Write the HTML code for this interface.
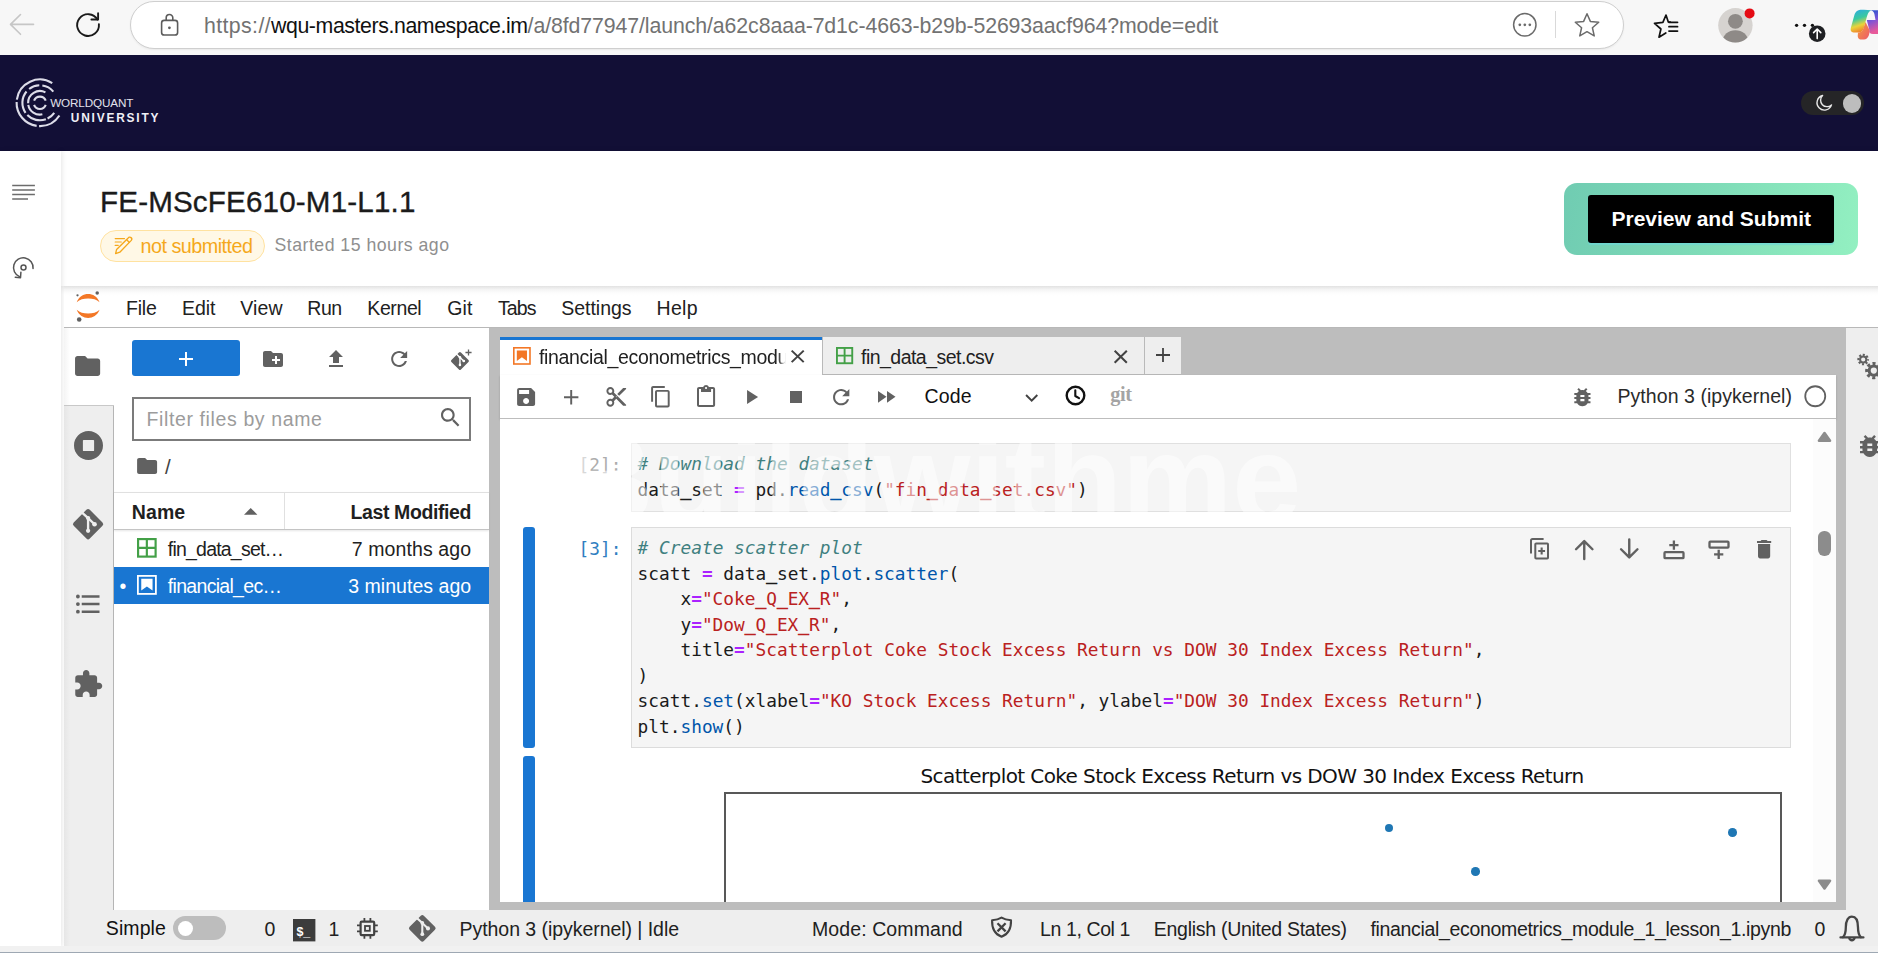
<!DOCTYPE html>
<html lang="en"><head><meta charset="utf-8"><title>FE-MScFE610-M1-L1.1</title>
<style>
html,body{margin:0;padding:0;}
body{width:1878px;height:953px;overflow:hidden;background:#fff;position:relative;font-family:"Liberation Sans",sans-serif;}
.a{position:absolute;box-sizing:border-box;}
.t{position:absolute;white-space:pre;margin:0;padding:0;}
svg{position:absolute;overflow:visible;}
</style></head>
<body>
<div class="a" style="left:0px;top:0px;width:1878px;height:55px;background:#f7f7f7;"></div>
<div class="a" style="left:130px;top:1px;width:1494px;height:48px;background:#fff;border:1.5px solid #cfcfcf;border-radius:24px;box-shadow:0 1px 2px rgba(0,0,0,.06);"></div>
<div class="a" style="left:0px;top:55px;width:1878px;height:95.5px;background:#120f36;"></div>
<div class="a" style="left:1801px;top:90.5px;width:63px;height:24.5px;background:#252527;border-radius:12.5px;"></div>
<div class="a" style="left:1842.5px;top:94px;width:18.5px;height:18.5px;background:#bdbdbd;border-radius:50%;"></div>
<div class="a" style="left:61px;top:150.5px;width:1817px;height:135.5px;background:#fff;box-shadow:0 2px 7px rgba(0,0,0,.13);"></div>
<div class="a" style="left:0;top:150.5px;width:60.8px;height:796px;background:#fff;box-shadow:1px 0 5px rgba(0,0,0,.10);"></div>
<div class="a" style="left:100px;top:230px;width:165px;height:32px;background:#fff8e6;border:1px solid #ffe2a0;border-radius:16px;"></div>
<div class="a" style="left:1564px;top:183px;width:294px;height:72px;border-radius:13px;background:linear-gradient(100deg,#70ccb2 0%,#7fdcb8 50%,#93f0c1 100%);"></div>
<div class="a" style="left:1588px;top:195px;width:246px;height:48px;border-radius:3px;background:#000;box-shadow:0 1.5px 1px rgba(110,215,215,.7);"></div>
<div class="a" style="left:64px;top:286px;width:1814px;height:42px;background:linear-gradient(180deg,#e2e2e2 0,#f4f4f4 3.5px,#fdfdfd 7px,#fff 10px);border-bottom:1px solid #b8b8b8;"></div>
<div class="a" style="left:64px;top:328px;width:1814px;height:582px;background:#bdbdbd;"></div>
<div class="a" style="left:64px;top:328px;width:50px;height:582px;background:linear-gradient(90deg,#e6e6e6 0,#eee 6px);border-right:1px solid #b5b5b5;"></div>
<div class="a" style="left:64px;top:328px;width:50px;height:77.5px;background:linear-gradient(90deg,#f4f4f4 0,#fff 6px);border-bottom:1px solid #c8c8c8;"></div>
<div class="a" style="left:114px;top:328px;width:375.3px;height:582px;background:#fff;"></div>
<div class="a" style="left:132px;top:340px;width:108px;height:36px;background:#1976d2;border-radius:3px;"></div>
<div class="a" style="left:132px;top:396.5px;width:339px;height:44px;background:#fff;border:2px solid #7b7b7b;"></div>
<div class="a" style="left:114px;top:492px;width:375.3px;height:37.5px;background:#fff;border-top:1px solid #e0e0e0;border-bottom:1px solid #c4c4c4;box-shadow:0 1px 2px rgba(0,0,0,.10);"></div>
<div class="a" style="left:284px;top:493px;width:1px;height:36px;background:#e0e0e0;"></div>
<div class="a" style="left:114px;top:567px;width:375.3px;height:36.5px;background:#1976d2;"></div>
<div class="a" style="left:1846px;top:328px;width:32px;height:582px;background:#eee;"></div>
<div class="a" style="left:64px;top:910px;width:1814px;height:36px;background:linear-gradient(90deg,#e6e6e6 0,#eee 6px);"></div>
<div class="a" style="left:0px;top:946px;width:1878px;height:5.5px;background:#f1f1f1;"></div>
<div class="a" style="left:0px;top:951.6px;width:1878px;height:2px;background:#9ea8b3;"></div>
<div class="a" style="left:500px;top:337px;width:322px;height:38px;background:#fff;border-top:3px solid #1976d2;"></div>
<div class="a" style="left:822px;top:337.3px;width:323px;height:37.7px;background:#eee;border:1px solid #b9b9b9;border-top:none;"></div>
<div class="a" style="left:1145px;top:337.3px;width:35.8px;height:37.7px;background:#eee;border-bottom:1px solid #b9b9b9;"></div>
<div class="a" style="left:500px;top:375px;width:1336px;height:43.5px;background:#fff;border-bottom:1px solid #bdbdbd;box-shadow:0 1px 2px rgba(0,0,0,.18);"></div>
<div class="a" style="left:500px;top:418.5px;width:1336px;height:483.5px;background:#fff;overflow:hidden;"><div class="a" style="left:1313px;top:0.0px;width:23px;height:484px;background:#fcfcfc;"></div><div class="a" style="left:1318.2px;top:112.10000000000002px;width:12.4px;height:25.2px;background:#8c8c8c;border-radius:6.2px;"></div><div class="a" style="left:131px;top:24.5px;width:1160px;height:68.5px;background:#f5f5f5;border:1px solid #e0e0e0;"></div><div class="a" style="left:131px;top:108.5px;width:1160px;height:221px;background:#f5f5f5;border:1px solid #dcdcdc;"></div><div class="a" style="left:23px;top:108.5px;width:12px;height:220.5px;background:#1976d2;border-radius:3px;"></div><div class="a" style="left:23px;top:337.5px;width:12px;height:200px;background:#1976d2;border-radius:3px;"></div><div class="a" style="left:224px;top:373.5px;width:1058px;height:200px;border:2px solid #585858;background:#fff;"></div><div class="a" style="left:884.8px;top:405.4000000000001px;width:8.6px;height:8.6px;background:#1f77b4;border-radius:50%;"></div><div class="a" style="left:971.2px;top:448.5px;width:8.6px;height:8.6px;background:#1f77b4;border-radius:50%;"></div><div class="a" style="left:1228.2px;top:409.70000000000005px;width:8.6px;height:8.6px;background:#1f77b4;border-radius:50%;"></div></div>
<svg style="left:74px;top:289px" width="30" height="36" viewBox="0 0 30 36"><path d="M2.700 13.200C5 7.500 9.500 5 14.150 5S23.300 7.500 25.600 13.200C22.600 10.400 18.800 9.400 14.150 9.400S5.700 10.400 2.700 13.200z" fill="#f37726"/><path d="M2.700 20.800C5 26.500 9.500 29 14.150 29S23.300 26.500 25.600 20.800C22.600 23.600 18.800 24.600 14.150 24.600S5.700 23.600 2.700 20.800z" fill="#f37726"/><circle cx="23.200" cy="3.900" r="1.750" fill="#616161"/><circle cx="3.500" cy="6.300" r="1.150" fill="#616161"/><circle cx="5.200" cy="30.500" r="2.300" fill="#616161"/></svg>
<svg style="left:75.4px;top:355.9px;" width="25.2" height="20.1" viewBox="2 4 20 16" preserveAspectRatio="xMidYMid meet" fill="#616161"><path d="M10 4H4c-1.1 0-1.99.9-1.99 2L2 18c0 1.1.9 2 2 2h16c1.1 0 2-.9 2-2V8c0-1.1-.9-2-2-2h-8l-2-2z"/></svg>
<svg style="left:73.5px;top:431px;" width="29.0" height="29" viewBox="8 8 496 496" preserveAspectRatio="xMidYMid meet" fill="#616161"><path d="M256 8C119 8 8 119 8 256s111 248 248 248 248-111 248-248S393 8 256 8zm96 328c0 8.800-7.200 16-16 16H176c-8.800 0-16-7.200-16-16V176c0-8.800 7.200-16 16-16h160c8.800 0 16 7.200 16 16v160z"/></svg>
<svg style="left:72.8px;top:509.4px;" width="30.2" height="30.3" viewBox="6.2 6.2 87.6 87.6" preserveAspectRatio="xMidYMid meet" fill="#616161"><rect x="17" y="17" width="66" height="66" rx="7" transform="rotate(45 50 50)"/><g fill="none" stroke="#eee" stroke-width="6.800" stroke-linecap="butt"><path d="M32.500 16.500L50 32.500V69"/><path d="M51.500 34L68.700 50.300"/></g><g fill="#eee"><circle cx="50" cy="32.500" r="6.200"/><circle cx="50" cy="69.300" r="6.200"/><circle cx="68.700" cy="50.300" r="6.700"/></g></svg>
<svg style="left:75.9px;top:593.5px;" width="23.5" height="20.2" viewBox="2.5 4.5 18.5 15.0" preserveAspectRatio="xMidYMid meet" fill="#616161"><path d="M7,5H21V7H7V5M7,13V11H21V13H7M4,4.5A1.5,1.5 0 0,1 5.5,6A1.5,1.5 0 0,1 4,7.5A1.5,1.5 0 0,1 2.5,6A1.5,1.5 0 0,1 4,4.5M4,10.5A1.5,1.5 0 0,1 5.5,12A1.5,1.5 0 0,1 4,13.5A1.5,1.5 0 0,1 2.5,12A1.5,1.5 0 0,1 4,10.5M7,19V17H21V19H7M4,16.5A1.5,1.5 0 0,1 5.5,18A1.5,1.5 0 0,1 4,19.5A1.5,1.5 0 0,1 2.5,18A1.5,1.5 0 0,1 4,16.5Z"/></svg>
<svg style="left:74.5px;top:669.5px;" width="27.5" height="27.0" viewBox="2 1 21 21" preserveAspectRatio="xMidYMid meet" fill="#616161"><path d="M20.5 11H19V7c0-1.1-.9-2-2-2h-4V3.5C13 2.12 11.88 1 10.5 1S8 2.12 8 3.5V5H4c-1.1 0-1.99.9-1.99 2v3.8H3.5c1.49 0 2.7 1.21 2.7 2.7s-1.21 2.7-2.7 2.7H2V20c0 1.1.9 2 2 2h3.8v-1.5c0-1.49 1.21-2.7 2.7-2.7 1.49 0 2.7 1.21 2.7 2.7V22H17c1.1 0 2-.9 2-2v-4h1.5c1.38 0 2.5-1.12 2.5-2.5S21.88 11 20.5 11z"/></svg>
<svg style="left:179.2px;top:351.5px;" width="14.0" height="14.0" viewBox="5 5 14 14" preserveAspectRatio="xMidYMid meet" fill="#fff"><path d="M19 13h-6v6h-2v-6H5v-2h6V5h2v6h6v2z"/></svg>
<svg style="left:263px;top:351px;" width="20" height="16" viewBox="2 4 20 16" preserveAspectRatio="xMidYMid meet" fill="#616161"><path d="M20 6h-8l-2-2H4c-1.11 0-1.99.89-1.99 2L2 18c0 1.11.89 2 2 2h16c1.11 0 2-.89 2-2V8c0-1.11-.89-2-2-2zm-1 8h-3v3h-2v-3h-3v-2h3V9h2v3h3v2z"/></svg>
<svg style="left:329px;top:350px;" width="14" height="17" viewBox="5 3 14 17" preserveAspectRatio="xMidYMid meet" fill="#616161"><path d="M9 16h6v-6h4l-7-7-7 7h4zm-4 2h14v2H5z"/></svg>
<svg style="left:391px;top:351px;" width="16.3" height="16" viewBox="4 4 16 16" preserveAspectRatio="xMidYMid meet" fill="#616161"><path d="M17.65 6.35C16.2 4.9 14.21 4 12 4c-4.42 0-7.99 3.58-7.99 8s3.57 8 7.99 8c3.73 0 6.84-2.55 7.73-6h-2.08c-.82 2.33-3.04 4-5.65 4-3.31 0-6-2.69-6-6s2.69-6 6-6c1.66 0 3.14.69 4.22 1.78L13 11h7V4l-2.35 2.35z"/></svg>
<svg style="left:451.3px;top:352px;" width="17.9" height="17.9" viewBox="6.2 6.2 87.6 87.6" preserveAspectRatio="xMidYMid meet" fill="#616161"><rect x="17" y="17" width="66" height="66" rx="7" transform="rotate(45 50 50)"/><g fill="none" stroke="#fff" stroke-width="6.800" stroke-linecap="butt"><path d="M32.500 16.500L50 32.500V69"/><path d="M51.500 34L68.700 50.300"/></g><g fill="#fff"><circle cx="50" cy="32.500" r="6.200"/><circle cx="50" cy="69.300" r="6.200"/><circle cx="68.700" cy="50.300" r="6.700"/></g></svg>
<svg style="left:464.600px;top:349.200px" width="7" height="7" viewBox="0 0 8 8"><path d="M4 0.500V7.500M0.500 4H7.500" stroke="#616161" stroke-width="1.500" fill="none"/></svg>
<svg style="left:440.6px;top:407.5px;" width="18.4" height="18.5" viewBox="3 3 17.49 17.49" preserveAspectRatio="xMidYMid meet" fill="#616161"><path d="M15.5 14h-.79l-.28-.27C15.41 12.59 16 11.11 16 9.5 16 5.91 13.09 3 9.5 3S3 5.91 3 9.5 5.91 16 9.5 16c1.61 0 3.09-.59 4.23-1.57l.27.28v.79l5 4.99L20.49 19l-4.99-5zm-6 0C7.01 14 5 11.99 5 9.5S7.01 5 9.5 5 14 7.01 14 9.5 11.99 14 9.5 14z"/></svg>
<svg style="left:136.8px;top:458px;" width="20.2" height="16" viewBox="2 4 20 16" preserveAspectRatio="xMidYMid meet" fill="#616161"><path d="M10 4H4c-1.1 0-1.99.9-1.99 2L2 18c0 1.1.9 2 2 2h16c1.1 0 2-.9 2-2V8c0-1.1-.9-2-2-2h-8l-2-2z"/></svg>
<svg style="left:244.400px;top:507.500px" width="13.400" height="6.800" viewBox="0 0 14 7"><path d="M0 7L7 0L14 7z" fill="#616161"/></svg>
<svg style="left:137.3px;top:538.2px" width="19.7" height="19.7" viewBox="0 0 20 20" fill="none" stroke="#43a047" stroke-width="2.200"><rect x="1.100" y="1.100" width="17.800" height="17.800"/><path d="M10 1V19M1 10H19"/></svg>
<svg style="left:137.3px;top:574.8px" width="19.8" height="19.8" viewBox="0 0 20 20"><rect x="0.900" y="0.900" width="18.200" height="18.200" fill="none" stroke="#fff" stroke-width="1.800"/><path d="M4.300 3.800H15.700V15.600L10 11.500L4.300 15.600z" fill="#fff"/></svg>
<svg style="left:513.4px;top:346.8px" width="17.8" height="17.8" viewBox="0 0 20 20"><rect x="0.900" y="0.900" width="18.200" height="18.200" fill="none" stroke="#f37726" stroke-width="1.800"/><path d="M4.300 3.800H15.700V15.600L10 11.500L4.300 15.600z" fill="#f37726"/></svg>
<svg style="left:836px;top:347.2px" width="17.2" height="17.2" viewBox="0 0 20 20" fill="none" stroke="#43a047" stroke-width="2.200"><rect x="1.100" y="1.100" width="17.800" height="17.800"/><path d="M10 1V19M1 10H19"/></svg>
<svg style="left:791.3px;top:349.8px" width="13.4" height="12.8" viewBox="0 0 10 10" preserveAspectRatio="none"><path d="M0.500 0.500L9.500 9.500M9.500 0.500L0.500 9.500" stroke="#424242" stroke-width="1.500" fill="none"/></svg>
<svg style="left:1113.5px;top:349.5px" width="13.5" height="13.5" viewBox="0 0 10 10" preserveAspectRatio="none"><path d="M0.500 0.500L9.500 9.500M9.500 0.500L0.500 9.500" stroke="#424242" stroke-width="1.500" fill="none"/></svg>
<svg style="left:1156px;top:348.300px" width="14" height="14" viewBox="0 0 14 14"><path d="M7 0V14M0 7H14" stroke="#424242" stroke-width="1.800" fill="none"/></svg>
<svg style="left:516.8px;top:387.9px;" width="18.2" height="18.0" viewBox="3 3 18 18" preserveAspectRatio="xMidYMid meet" fill="#616161"><path d="M17 3H5c-1.11 0-2 .9-2 2v14c0 1.1.89 2 2 2h14c1.1 0 2-.9 2-2V7l-4-4zm-5 16c-1.66 0-3-1.34-3-3s1.34-3 3-3 3 1.34 3 3-1.34 3-3 3zm3-10H5V5h10v4z"/></svg>
<svg style="left:563.800px;top:389.800px" width="14.400" height="14.400" viewBox="0 0 14 14"><path d="M7 0V14M0 7H14" stroke="#616161" stroke-width="1.900" fill="none"/></svg>
<svg style="left:606px;top:387.3px;" width="20.5" height="19.7" viewBox="2 2 20 20" preserveAspectRatio="xMidYMid meet" fill="#616161"><path d="M9.64 7.64c.23-.5.36-1.05.36-1.64 0-2.21-1.79-4-4-4S2 3.79 2 6s1.79 4 4 4c.59 0 1.14-.13 1.64-.36L10 12l-2.36 2.36C7.14 14.13 6.59 14 6 14c-2.21 0-4 1.79-4 4s1.79 4 4 4 4-1.79 4-4c0-.59-.13-1.14-.36-1.64L12 14l7 7h3v-1L9.64 7.64zM6 8c-1.1 0-2-.89-2-2s.9-2 2-2 2 .89 2 2-.9 2-2 2zm0 12c-1.1 0-2-.89-2-2s.9-2 2-2 2 .89 2 2-.9 2-2 2zm6-7.5c-.28 0-.5-.22-.5-.5s.22-.5.5-.5.5.22.5.5-.22.5-.5.5zM19 3l-6 6 2 2 7-7V3z"/></svg>
<svg style="left:651px;top:386.3px;" width="18.8" height="21.5" viewBox="2 1 19 22" preserveAspectRatio="xMidYMid meet" fill="#616161"><path d="M16 1H4c-1.1 0-2 .9-2 2v14h2V3h12V1zm3 4H8c-1.1 0-2 .9-2 2v14c0 1.1.9 2 2 2h11c1.1 0 2-.9 2-2V7c0-1.1-.9-2-2-2zm0 16H8V7h11v14z"/></svg>
<svg style="left:696.8px;top:385.4px;" width="18.1" height="21.9" viewBox="3 0 18 22" preserveAspectRatio="none" fill="#616161"><path d="M19 2h-4.18C14.4.84 13.3 0 12 0c-1.3 0-2.4.84-2.82 2H5c-1.1 0-2 .9-2 2v16c0 1.1.9 2 2 2h14c1.1 0 2-.9 2-2V4c0-1.1-.9-2-2-2zm-7 0c.55 0 1 .45 1 1s-.45 1-1 1-1-.45-1-1 .45-1 1-1zm7 18H5V4h2v3h10V4h2v16z"/></svg>
<svg style="left:746.9px;top:390.3px;" width="11.1" height="14.0" viewBox="8 5 11 14" preserveAspectRatio="xMidYMid meet" fill="#616161"><path d="M8 5v14l11-7z"/></svg>
<div class="a" style="left:790px;top:391.4px;width:12px;height:12px;background:#616161;"></div>
<svg style="left:833px;top:388.7px;" width="16.4" height="16.3" viewBox="4 4 16 16" preserveAspectRatio="xMidYMid meet" fill="#616161"><path d="M17.65 6.35C16.2 4.9 14.21 4 12 4c-4.42 0-7.99 3.58-7.99 8s3.57 8 7.99 8c3.73 0 6.84-2.55 7.73-6h-2.08c-.82 2.33-3.04 4-5.65 4-3.31 0-6-2.69-6-6s2.69-6 6-6c1.66 0 3.14.69 4.22 1.78L13 11h7V4l-2.35 2.35z"/></svg>
<svg style="left:877.7px;top:391.3px;" width="17.5" height="11.7" viewBox="4 6 17.5 12" preserveAspectRatio="none" fill="#616161"><path d="M4 18l8.5-6L4 6v12zm9-12v12l8.5-6L13 6z"/></svg>
<svg style="left:1024.500px;top:393.800px" width="13.400" height="8.200" viewBox="0 0 13 8"><path d="M1 1L6.500 6.500L12 1" stroke="#424242" stroke-width="1.900" fill="none"/></svg>
<svg style="left:1065.400px;top:384.800px" width="21" height="21" viewBox="0 0 21 21" fill="none" stroke="#111" stroke-width="2.400"><circle cx="10.500" cy="10.500" r="8.800"/><path d="M10.300 5.200V11L14 13.200" stroke-width="2.100" stroke-linecap="round" stroke-linejoin="round"/></svg>
<svg style="left:1574px;top:388px;" width="16.8" height="18.2" viewBox="4 3 16 18" preserveAspectRatio="xMidYMid meet" fill="#616161"><path d="M20 8h-2.81c-.45-.78-1.07-1.45-1.82-1.96L17 4.41 15.59 3l-2.17 2.17C12.96 5.06 12.49 5 12 5c-.49 0-.96.06-1.41.17L8.41 3 7 4.41l1.62 1.63C7.88 6.55 7.26 7.22 6.81 8H4v2h2.09c-.05.33-.09.66-.09 1v1H4v2h2v1c0 .34.04.67.09 1H4v2h2.81c1.04 1.79 2.97 3 5.19 3s4.15-1.21 5.19-3H20v-2h-2.09c.05-.33.09-.66.09-1v-1h2v-2h-2v-1c0-.34-.04-.67-.09-1H20V8zm-6 8h-4v-2h4v2zm0-4h-4v-2h4v2z"/></svg>
<svg style="left:1803.500px;top:384.700px" width="22.500" height="22.500" viewBox="0 0 22.500 22.500"><circle cx="11.250" cy="11.250" r="10" fill="none" stroke="#616161" stroke-width="1.800"/></svg>
<svg style="left:1529.600px;top:538px" width="19" height="21.600" viewBox="0 0 19 21.600" fill="none" stroke="#616161" stroke-width="2"><path d="M13.600 1H2.600C1.700 1 1 1.700 1 2.600V15.600"/><rect x="5.300" y="5.400" width="12.700" height="15.200" rx="0.800"/><path d="M11.650 9.600V16.400M8.250 13H15.050" stroke-width="2.100"/></svg>
<svg style="left:1574px;top:539px" width="20.500" height="20.500" viewBox="0 0 20 20" fill="none" stroke="#616161" stroke-width="2.350" stroke-linecap="round" stroke-linejoin="round"><path d="M10 19.500V2.500M2 10L10 2L18 10"/></svg>
<svg style="left:1618.8px;top:539px" width="20.500" height="20.500" viewBox="0 0 20 20" fill="none" stroke="#616161" stroke-width="2.350" stroke-linecap="round" stroke-linejoin="round"><path d="M10 0.500V17.500M2 10L10 18L18 10"/></svg>
<svg style="left:1663px;top:538.500px" width="22" height="21" viewBox="0 0 22 21" fill="none" stroke="#616161" stroke-width="2.300"><path d="M10.900 1.600V10.800M6.300 6.200H15.500"/><rect x="1.500" y="13.200" width="19" height="6" rx="0.800"/></svg>
<svg style="left:1708.300px;top:539px" width="22" height="21" viewBox="0 0 22 21" fill="none" stroke="#616161" stroke-width="2.300"><path d="M10.700 10.800V20M6.100 15.400H15.300"/><rect x="1.500" y="2.600" width="19" height="6" rx="0.800"/></svg>
<svg style="left:1756.8px;top:539.8px;" width="14.2" height="18.4" viewBox="5 3 14 18" preserveAspectRatio="none" fill="#616161"><path d="M6 19c0 1.1.9 2 2 2h8c1.1 0 2-.9 2-2V7H6v12zM19 4h-3.5l-1-1h-5l-1 1H5v2h14V4z"/></svg>
<svg style="left:1817.300px;top:430.900px" width="15" height="11.500" viewBox="0 0 15 11.500"><path d="M2 9.800L7.500 2.100L13 9.800z" fill="#8c8c8c" stroke="#8c8c8c" stroke-width="2.600" stroke-linejoin="round"/></svg>
<svg style="left:1817px;top:879.300px" width="15" height="11.500" viewBox="0 0 15 11.500"><path d="M2 1.700L7.500 9.400L13 1.700z" fill="#8c8c8c" stroke="#8c8c8c" stroke-width="2.600" stroke-linejoin="round"/></svg>
<div class="a" style="left:173.300px;top:916.400px;width:52.400px;height:23.500px;background:#bdbdbd;border-radius:12px;"></div>
<div class="a" style="left:177.800px;top:920.500px;width:15.300px;height:15.300px;background:#fff;border-radius:50%;"></div>
<svg style="left:292.800px;top:919.200px" width="22.400" height="22.400" viewBox="0 0 22.400 22.400"><rect width="22.400" height="22.400" fill="#3c3c3c"/><text x="3.400" y="16.600" font-family="'Liberation Sans',sans-serif" font-size="12.500" font-weight="700" fill="#fff">$_</text></svg>
<svg style="left:356.500px;top:917.800px" width="20.800" height="20.800" viewBox="0 0 20.800 20.800" fill="none" stroke="#424242"><rect x="3.600" y="3.600" width="13.600" height="13.600" rx="1.200" stroke-width="2.200"/><rect x="8" y="8" width="4.800" height="4.800" stroke-width="1.800"/><path d="M7.400 0V3M13.400 0V3M7.400 17.800V20.800M13.400 17.800V20.800M0 7.400H3M0 13.400H3M17.800 7.400H20.800M17.800 13.400H20.800" stroke-width="1.800"/></svg>
<svg style="left:408.7px;top:915.4px;" width="26.6" height="26.6" viewBox="6.2 6.2 87.6 87.6" preserveAspectRatio="xMidYMid meet" fill="#616161"><rect x="17" y="17" width="66" height="66" rx="7" transform="rotate(45 50 50)"/><g fill="none" stroke="#eee" stroke-width="6.800" stroke-linecap="butt"><path d="M32.500 16.500L50 32.500V69"/><path d="M51.500 34L68.700 50.300"/></g><g fill="#eee"><circle cx="50" cy="32.500" r="6.200"/><circle cx="50" cy="69.300" r="6.200"/><circle cx="68.700" cy="50.300" r="6.700"/></g></svg>
<svg style="left:990px;top:915.800px" width="23" height="23" viewBox="0 0 23 23" fill="none" stroke="#424242" stroke-width="2.100" stroke-linejoin="round"><path d="M11.550 1.600C8.800 3.300 5.300 4 2.100 4.200C1.800 11.700 4.300 17.900 11.550 20.700C18.800 17.900 21.300 11.700 21 4.200C17.800 4 14.300 3.300 11.550 1.600z"/><path d="M7.500 7.300L15.600 15.400M15.600 7.300L7.500 15.400" stroke-width="2.300"/></svg>
<svg style="left:1839px;top:915px" width="26" height="28" viewBox="0 0 26 28" fill="none" stroke="#454545" stroke-width="2.300" stroke-linecap="round" stroke-linejoin="round"><path d="M3.900 22.300C6 20.200 6.800 17.500 6.800 12.500C6.800 5.500 9.300 1.600 12.900 1.600S19 5.500 19 12.500C19 17.500 19.800 20.200 21.900 22.300"/><path d="M1.500 22.400H24.400"/><path d="M10.300 23.300A2.700 2.700 0 0 0 15.500 23.300"/></svg>
<svg style="left:1857px;top:353px" width="21" height="28" viewBox="0 0 21 28" fill="none" stroke="#616161"><circle cx="6.200" cy="6.500" r="3.100" stroke-width="2"/><circle cx="6.200" cy="6.500" r="4.700" stroke-width="2.300" stroke-dasharray="2 1.691" stroke-dashoffset="1"/><circle cx="16.800" cy="17.600" r="4.650" stroke-width="3.100"/><circle cx="16.800" cy="17.600" r="7.100" stroke-width="3.100" stroke-dasharray="3 2.576" stroke-dashoffset="1.500"/></svg>
<svg style="left:1859.5px;top:435px;" width="19.6" height="22" viewBox="4 3 16 18" preserveAspectRatio="xMidYMid meet" fill="#616161"><path d="M20 8h-2.81c-.45-.78-1.07-1.45-1.82-1.96L17 4.41 15.59 3l-2.17 2.17C12.96 5.06 12.49 5 12 5c-.49 0-.96.06-1.41.17L8.41 3 7 4.41l1.62 1.63C7.88 6.55 7.26 7.22 6.81 8H4v2h2.09c-.05.33-.09.66-.09 1v1H4v2h2v1c0 .34.04.67.09 1H4v2h2.81c1.04 1.79 2.97 3 5.19 3s4.15-1.21 5.19-3H20v-2h-2.09c.05-.33.09-.66.09-1v-1h2v-2h-2v-1c0-.34-.04-.67-.09-1H20V8zm-6 8h-4v-2h4v2zm0-4h-4v-2h4v2z"/></svg>
<svg style="left:9px;top:13px" width="26" height="23" viewBox="0 0 26 23" fill="none" stroke="#c6c6c6" stroke-width="1.600" stroke-linecap="round" stroke-linejoin="round"><path d="M24.500 11.400H1.600M11.500 1.500L1.500 11.400L11.500 21.300"/></svg>
<svg style="left:75px;top:12px" width="27" height="27" viewBox="0 0 27 27" fill="none" stroke="#1a1a1a" stroke-width="1.900" stroke-linecap="round" stroke-linejoin="round"><path d="M23.91 12.10A10.9 10.9 0 1 1 22.49 7.60"/><path d="M23.100 1.300V7.500H16.400"/></svg>
<svg style="left:158.500px;top:12.500px" width="21" height="24" viewBox="0 0 21 24" fill="none" stroke="#5c5c5c" stroke-width="1.600"><rect x="2.600" y="7.400" width="16" height="14.600" rx="2.600"/><path d="M7.200 7.400V4.800A3.300 3.300 0 0 1 13.800 4.800V7.400"/><circle cx="10.400" cy="14.800" r="1.400" fill="#5c5c5c" stroke="none"/></svg>
<svg style="left:1512px;top:12px" width="26" height="26" viewBox="0 0 26 26"><circle cx="12.800" cy="12.800" r="11.200" fill="none" stroke="#6b6b6b" stroke-width="1.500"/><g fill="#6b6b6b"><circle cx="7.800" cy="12.800" r="1.350"/><circle cx="12.800" cy="12.800" r="1.350"/><circle cx="17.800" cy="12.800" r="1.350"/></g></svg>
<div class="a" style="left:1555px;top:11px;width:1.2px;height:27px;background:#d9d9d9;"></div>
<svg style="left:1574px;top:11.500px" width="26" height="27" viewBox="0 0 26 27"><path d="M13.00 1.70 L16.35 9.39 L24.70 10.20 L18.42 15.76 L20.23 23.95 L13.00 19.70 L5.77 23.95 L7.58 15.76 L1.30 10.20 L9.65 9.39 z" fill="none" stroke="#6b6b6b" stroke-width="1.500" stroke-linejoin="round"/></svg>
<svg style="left:1652px;top:12px" width="28" height="28" viewBox="0 0 28 28" fill="none" stroke="#111" stroke-width="1.700" stroke-linecap="round" stroke-linejoin="round"><path d="M18.300 10.200L16.300 10L14 3L10.900 10.400L2.500 11.300L8.900 17L7 25.200L13.800 21"/><path d="M17 10.300H25.500M17 14.700H25.500M17 19.100H25.500" stroke-width="1.800"/></svg>
<svg style="left:1717.500px;top:7.500px" width="37" height="35" viewBox="0 0 37 35"><defs><clipPath id="avc"><circle cx="17.400" cy="17.300" r="17.200"/></clipPath></defs><circle cx="17.400" cy="17.300" r="17.200" fill="#d6d3d0"/><g clip-path="url(#avc)" fill="#8e8a87"><circle cx="17.400" cy="13.300" r="7.400"/><ellipse cx="17.400" cy="33" rx="12.600" ry="10.800"/></g><circle cx="31.600" cy="5.400" r="5" fill="#e50b14"/></svg>
<svg style="left:1793px;top:20px" width="34" height="24" viewBox="0 0 34 24"><g fill="#111"><circle cx="3.600" cy="5.300" r="1.650"/><circle cx="11.500" cy="5.300" r="1.650"/><circle cx="19.400" cy="5.300" r="1.650"/></g><circle cx="24.200" cy="13.700" r="8.300" fill="#1f2023"/><path d="M24.200 18.600V9.300M20.600 12.600L24.200 9L27.800 12.600" fill="none" stroke="#fff" stroke-width="1.600" stroke-linecap="round" stroke-linejoin="round"/></svg>
<svg style="left:1849px;top:8px" width="29" height="34" viewBox="0 0 29 34"><defs><linearGradient id="cpa" x1="0" y1="0" x2="0.300" y2="1"><stop offset="0" stop-color="#2aa7e8"/><stop offset="0.450" stop-color="#39c9a0"/><stop offset="0.750" stop-color="#e9d43a"/><stop offset="1" stop-color="#f08a2c"/></linearGradient><linearGradient id="cpb" x1="0" y1="0" x2="0.200" y2="1"><stop offset="0" stop-color="#1b57c9"/><stop offset="0.500" stop-color="#7a55d8"/><stop offset="1" stop-color="#e85a9a"/></linearGradient><linearGradient id="cpc" x1="0" y1="0" x2="1" y2="1"><stop offset="0" stop-color="#f2a03a"/><stop offset="1" stop-color="#ee5a6a"/></linearGradient></defs><path d="M8 3C9.500 1.800 12 1.600 15 1.800L22 2.200C19.500 3.500 18.600 6 17.800 9L14.800 20C13.800 23.500 12 24.500 8.500 24.400H4.500C2 24.300 1.200 22.500 1.800 20L5.400 7C5.900 5.300 6.800 3.900 8 3z" fill="url(#cpa)"/><path d="M20 2.200C23 2 25 3.500 25.400 6L26.500 12L29 12V2.200z M17.800 12H29V26H24C21 26 19.800 24.500 20.300 22z" fill="url(#cpb)"/><path d="M9 24.400C12 24.400 13.500 23 14.400 20.500L16.500 14L20.500 22C21 25 19.500 31.500 15 31.500H12.500C9.500 31.500 8.500 29.500 8.800 27z" fill="url(#cpc)"/></svg>
<svg style="left:8px;top:70px" width="64" height="64" viewBox="0 0 64 64" fill="none" stroke="#dcdce8" stroke-width="2.100"><path d="M44.25 13.04A23.3 23.3 0 0 0 8.83 29.56M8.61 31.99A23.3 23.3 0 0 0 28.66 55.87M31.09 56.09A23.3 23.3 0 0 0 51.44 45.49M45.31 21.55A17.5 17.5 0 0 0 34.34 15.47M31.29 15.31A17.5 17.5 0 0 0 21.13 19.01M18.49 21.55A17.5 17.5 0 0 0 17.56 42.84M19.31 44.96A17.5 17.5 0 0 0 37.89 49.24M39.57 48.53A17.5 17.5 0 0 0 46.24 42.84M37.44 22.38A11.8 11.8 0 0 0 20.11 33.21M20.28 34.85A11.8 11.8 0 0 0 34.35 44.34M37.73 30.68A6.2 6.2 0 0 0 26.07 30.68M26.07 34.92A6.2 6.2 0 0 0 37.73 34.92"/></svg>
<svg style="left:1815px;top:94px" width="18" height="18" viewBox="0 0 18 18" fill="none" stroke="#e8e8e8" stroke-width="1.400" stroke-linejoin="round"><path d="M7.600 1.500A7.400 7.400 0 1 0 16.500 10.900A6.300 6.300 0 0 1 7.600 1.500z"/></svg>
<svg style="left:12px;top:184px" width="24" height="17" viewBox="0 0 24 17" stroke="#6c6c6c" stroke-width="1.500" fill="none"><path d="M0.200 1.400H22.900M0.200 5.900H22.900M0.200 10.400H22.900M0.200 15H16"/></svg>
<svg style="left:11px;top:255px" width="25" height="25" viewBox="0 0 25 25" fill="none" stroke="#555" stroke-width="1.500" stroke-linecap="round" stroke-linejoin="round"><path d="M22.06 13.45A9.8 9.8 0 1 0 8.47 21.62"/><path d="M4.300 22.200L9.500 22.700L9.900 17.300"/><circle cx="12.500" cy="12.600" r="2.500"/></svg>
<svg style="left:113.500px;top:236px" width="20" height="19" viewBox="0 0 20 19" fill="none" stroke="#f5a81c" stroke-width="1.350" stroke-linejoin="round" stroke-linecap="round"><path d="M14.200 1.900A1.900 1.900 0 0 1 17.300 4.400L5.800 16.200L1.600 17.600L2.600 13.400z"/><path d="M12.500 3.600L15.400 6.400"/><path d="M1.200 2.600H10.500M1.200 6H7.300M1.200 9.400H4.200" stroke-width="1.200"/></svg>
<span class="t" id="t0" style="left:204px;top:11.2px;height:30px;line-height:30px;font-size:21.3px;color:#727272;font-weight:400;font-family:'Liberation Sans', sans-serif;font-style:normal;letter-spacing:0.385px;">https://</span>
<span class="t" id="t1" style="left:271px;top:11.2px;height:30px;line-height:30px;font-size:21.3px;color:#111;font-weight:400;font-family:'Liberation Sans', sans-serif;font-style:normal;letter-spacing:-0.405px;">wqu-masters.namespace.im</span>
<span class="t" id="t2" style="left:527.6px;top:11.2px;height:30px;line-height:30px;font-size:21.3px;color:#727272;font-weight:400;font-family:'Liberation Sans', sans-serif;font-style:normal;letter-spacing:-0.097px;">/a/8fd77947/launch/a62c8aaa-7d1c-4663-b29b-52693aacf964?mode=edit</span>
<span class="t" id="t3" style="left:50.2px;top:95.2px;height:16px;line-height:16px;font-size:11.7px;color:#e2e2ec;font-weight:400;font-family:'Liberation Sans', sans-serif;font-style:normal;letter-spacing:-0.142px;">WORLDQUANT</span>
<span class="t" id="t4" style="left:70.8px;top:109.7px;height:16px;line-height:16px;font-size:11.9px;color:#f0f0f6;font-weight:700;font-family:'Liberation Sans', sans-serif;font-style:normal;letter-spacing:1.804px;">UNIVERSITY</span>
<span class="t" id="t5" style="left:100px;top:182.1px;height:40px;line-height:40px;font-size:29.6px;color:#1b1b1b;font-weight:400;font-family:'Liberation Sans', sans-serif;font-style:normal;letter-spacing:0.160px;-webkit-text-stroke:0.35px #1b1b1b;">FE-MScFE610-M1-L1.1</span>
<span class="t" id="t6" style="left:140.5px;top:230.8px;height:30px;line-height:30px;font-size:19.8px;color:#f5a81c;font-weight:400;font-family:'Liberation Sans', sans-serif;font-style:normal;letter-spacing:-0.520px;">not submitted</span>
<span class="t" id="t7" style="left:274.5px;top:230.4px;height:30px;line-height:30px;font-size:17.7px;color:#8f8f8f;font-weight:400;font-family:'Liberation Sans', sans-serif;font-style:normal;letter-spacing:0.490px;">Started 15 hours ago</span>
<span class="t" id="t8" style="left:1611.5px;top:203.6px;height:30px;line-height:30px;font-size:21px;color:#fff;font-weight:700;font-family:'Liberation Sans', sans-serif;font-style:normal;letter-spacing:-0.003px;">Preview and Submit</span>
<span class="t" id="t9" style="left:126.10000000000001px;top:293.1px;height:30px;line-height:30px;font-size:19.5px;color:#212121;font-weight:400;font-family:'Liberation Sans', sans-serif;font-style:normal;letter-spacing:-0.255px;">File</span>
<span class="t" id="t10" style="left:182.0px;top:293.1px;height:30px;line-height:30px;font-size:19.5px;color:#212121;font-weight:400;font-family:'Liberation Sans', sans-serif;font-style:normal;letter-spacing:-0.077px;">Edit</span>
<span class="t" id="t11" style="left:240.2px;top:293.1px;height:30px;line-height:30px;font-size:19.5px;color:#212121;font-weight:400;font-family:'Liberation Sans', sans-serif;font-style:normal;letter-spacing:0.145px;">View</span>
<span class="t" id="t12" style="left:307.2px;top:293.1px;height:30px;line-height:30px;font-size:19.5px;color:#212121;font-weight:400;font-family:'Liberation Sans', sans-serif;font-style:normal;letter-spacing:-0.394px;">Run</span>
<span class="t" id="t13" style="left:367.3px;top:293.1px;height:30px;line-height:30px;font-size:19.5px;color:#212121;font-weight:400;font-family:'Liberation Sans', sans-serif;font-style:normal;letter-spacing:-0.396px;">Kernel</span>
<span class="t" id="t14" style="left:447.2px;top:293.1px;height:30px;line-height:30px;font-size:19.5px;color:#212121;font-weight:400;font-family:'Liberation Sans', sans-serif;font-style:normal;letter-spacing:0.126px;">Git</span>
<span class="t" id="t15" style="left:498.0px;top:293.1px;height:30px;line-height:30px;font-size:19.5px;color:#212121;font-weight:400;font-family:'Liberation Sans', sans-serif;font-style:normal;letter-spacing:-0.876px;">Tabs</span>
<span class="t" id="t16" style="left:561.2px;top:293.1px;height:30px;line-height:30px;font-size:19.5px;color:#212121;font-weight:400;font-family:'Liberation Sans', sans-serif;font-style:normal;letter-spacing:-0.009px;">Settings</span>
<span class="t" id="t17" style="left:656.5px;top:293.1px;height:30px;line-height:30px;font-size:19.5px;color:#212121;font-weight:400;font-family:'Liberation Sans', sans-serif;font-style:normal;letter-spacing:0.348px;">Help</span>
<span class="t" id="t18" style="left:146.5px;top:403.8px;height:30px;line-height:30px;font-size:19.5px;color:#9c9c9c;font-weight:400;font-family:'Liberation Sans', sans-serif;font-style:normal;letter-spacing:0.618px;">Filter files by name</span>
<span class="t" id="t19" style="left:165px;top:451.6px;height:30px;line-height:30px;font-size:20.5px;color:#424242;font-weight:400;font-family:'Liberation Sans', sans-serif;font-style:normal;">/</span>
<span class="t" id="t20" style="left:131.8px;top:496.8px;height:30px;line-height:30px;font-size:19.5px;color:#1f1f1f;font-weight:700;font-family:'Liberation Sans', sans-serif;font-style:normal;letter-spacing:0.094px;">Name</span>
<span class="t" id="t21" style="left:350.5px;top:496.8px;height:30px;line-height:30px;font-size:19.5px;color:#1f1f1f;font-weight:700;font-family:'Liberation Sans', sans-serif;font-style:normal;letter-spacing:-0.390px;">Last Modified</span>
<span class="t" id="t22" style="left:167.8px;top:534.4px;height:30px;line-height:30px;font-size:19.5px;color:#212121;font-weight:400;font-family:'Liberation Sans', sans-serif;font-style:normal;letter-spacing:-0.790px;">fin_data_set…</span>
<span class="t" id="t23" style="left:351.8px;top:534.4px;height:30px;line-height:30px;font-size:19.5px;color:#212121;font-weight:400;font-family:'Liberation Sans', sans-serif;font-style:normal;letter-spacing:0.102px;">7 months ago</span>
<span class="t" id="t24" style="left:119.6px;top:571.4px;height:30px;line-height:30px;font-size:19.5px;color:#fff;font-weight:400;font-family:'Liberation Sans', sans-serif;font-style:normal;">•</span>
<span class="t" id="t25" style="left:167.8px;top:571.4px;height:30px;line-height:30px;font-size:19.5px;color:#fff;font-weight:400;font-family:'Liberation Sans', sans-serif;font-style:normal;letter-spacing:-0.691px;">financial_ec…</span>
<span class="t" id="t26" style="left:348.2px;top:571.4px;height:30px;line-height:30px;font-size:19.5px;color:#fff;font-weight:400;font-family:'Liberation Sans', sans-serif;font-style:normal;letter-spacing:0.038px;">3 minutes ago</span>
<span class="t" id="t27" style="left:1370.5px;top:913.9px;height:30px;line-height:30px;font-size:19.5px;color:#212121;font-weight:400;font-family:'Liberation Sans', sans-serif;font-style:normal;letter-spacing:-0.332px;">financial_econometrics_module_1_lesson_1.ipynb</span>
<span class="t" id="t28" style="left:539px;top:342.3px;height:30px;line-height:30px;font-size:19.5px;color:#212121;font-weight:400;font-family:'Liberation Sans', sans-serif;font-style:normal;letter-spacing:-0.332px;width:248px;overflow:hidden;-webkit-mask-image:linear-gradient(90deg,#000 0,#000 239px,transparent 247px);mask-image:linear-gradient(90deg,#000 0,#000 239px,transparent 247px);">financial_econometrics_module_1_lesson_1.ipynb</span>
<span class="t" id="t29" style="left:861px;top:342.3px;height:30px;line-height:30px;font-size:19.5px;color:#212121;font-weight:400;font-family:'Liberation Sans', sans-serif;font-style:normal;letter-spacing:-0.526px;">fin_data_set.csv</span>
<span class="t" id="t30" style="left:924.5px;top:380.9px;height:30px;line-height:30px;font-size:19.5px;color:#111;font-weight:400;font-family:'Liberation Sans', sans-serif;font-style:normal;letter-spacing:0.144px;">Code</span>
<span class="t" id="t31" style="left:1110.3px;top:378.8px;height:30px;line-height:30px;font-size:20.3px;color:#a4a4a4;font-weight:700;font-family:'Liberation Serif', serif;font-style:normal;letter-spacing:-0.377px;">git</span>
<span class="t" id="t32" style="left:1617.5px;top:381.2px;height:30px;line-height:30px;font-size:19.5px;color:#2a2a2a;font-weight:400;font-family:'Liberation Sans', sans-serif;font-style:normal;letter-spacing:0.054px;">Python 3 (ipykernel)</span>
<span class="t" id="t33" style="left:105.8px;top:912.6px;height:30px;line-height:30px;font-size:19.5px;color:#111;font-weight:400;font-family:'Liberation Sans', sans-serif;font-style:normal;letter-spacing:0.098px;">Simple</span>
<span class="t" id="t34" style="left:264.5px;top:913.9px;height:30px;line-height:30px;font-size:19.5px;color:#212121;font-weight:400;font-family:'Liberation Sans', sans-serif;font-style:normal;letter-spacing:0.141px;">0</span>
<span class="t" id="t35" style="left:328.6px;top:913.9px;height:30px;line-height:30px;font-size:19.5px;color:#212121;font-weight:400;font-family:'Liberation Sans', sans-serif;font-style:normal;letter-spacing:0.141px;">1</span>
<span class="t" id="t36" style="left:459.5px;top:913.9px;height:30px;line-height:30px;font-size:19.5px;color:#212121;font-weight:400;font-family:'Liberation Sans', sans-serif;font-style:normal;letter-spacing:-0.047px;">Python 3 (ipykernel) | Idle</span>
<span class="t" id="t37" style="left:812px;top:913.9px;height:30px;line-height:30px;font-size:19.5px;color:#212121;font-weight:400;font-family:'Liberation Sans', sans-serif;font-style:normal;letter-spacing:0.094px;">Mode: Command</span>
<span class="t" id="t38" style="left:1040px;top:913.9px;height:30px;line-height:30px;font-size:19.5px;color:#212121;font-weight:400;font-family:'Liberation Sans', sans-serif;font-style:normal;letter-spacing:-0.392px;">Ln 1, Col 1</span>
<span class="t" id="t39" style="left:1153.8px;top:913.9px;height:30px;line-height:30px;font-size:19.5px;color:#212121;font-weight:400;font-family:'Liberation Sans', sans-serif;font-style:normal;letter-spacing:-0.280px;">English (United States)</span>
<span class="t" id="t40" style="left:1814.5px;top:913.9px;height:30px;line-height:30px;font-size:19.5px;color:#212121;font-weight:400;font-family:'Liberation Sans', sans-serif;font-style:normal;letter-spacing:0.141px;">0</span>
<span class="t" id="t41" style="left:637.6px;top:451.1px;height:25.5px;line-height:25.5px;font-size:17.8px;color:#1a1a1a;font-weight:400;font-family:'DejaVu Sans Mono', 'Liberation Mono', monospace;font-style:normal;letter-spacing:0.015px;"><span style="color:#408080;font-style:italic;"># Download the dataset</span></span>
<span class="t" id="t42" style="left:637.6px;top:476.6px;height:25.5px;line-height:25.5px;font-size:17.8px;color:#1a1a1a;font-weight:400;font-family:'DejaVu Sans Mono', 'Liberation Mono', monospace;font-style:normal;letter-spacing:0.011px;"><span style="color:#1a1a1a;">data<span style="-webkit-text-stroke:0.7px currentColor;">_</span>set </span><span style="color:#aa22ff;font-weight:700;">=</span><span style="color:#1a1a1a;"> pd.</span><span style="color:#0055aa;">read<span style="-webkit-text-stroke:0.7px currentColor;">_</span>csv</span><span style="color:#1a1a1a;">(</span><span style="color:#ba2121;">&quot;fin<span style="-webkit-text-stroke:0.7px currentColor;">_</span>data<span style="-webkit-text-stroke:0.7px currentColor;">_</span>set.csv&quot;</span><span style="color:#1a1a1a;">)</span></span>
<span class="t" id="t43" style="left:637.6px;top:535.1px;height:25.5px;line-height:25.5px;font-size:17.8px;color:#1a1a1a;font-weight:400;font-family:'DejaVu Sans Mono', 'Liberation Mono', monospace;font-style:normal;letter-spacing:0.015px;"><span style="color:#408080;font-style:italic;"># Create scatter plot</span></span>
<span class="t" id="t44" style="left:637.6px;top:560.6px;height:25.5px;line-height:25.5px;font-size:17.8px;color:#1a1a1a;font-weight:400;font-family:'DejaVu Sans Mono', 'Liberation Mono', monospace;font-style:normal;letter-spacing:0.012px;"><span style="color:#1a1a1a;">scatt </span><span style="color:#aa22ff;font-weight:700;">=</span><span style="color:#1a1a1a;"> data<span style="-webkit-text-stroke:0.7px currentColor;">_</span>set.</span><span style="color:#0055aa;">plot</span><span style="color:#1a1a1a;">.</span><span style="color:#0055aa;">scatter</span><span style="color:#1a1a1a;">(</span></span>
<span class="t" id="t45" style="left:637.6px;top:586.1px;height:25.5px;line-height:25.5px;font-size:17.8px;color:#1a1a1a;font-weight:400;font-family:'DejaVu Sans Mono', 'Liberation Mono', monospace;font-style:normal;letter-spacing:0.009px;"><span style="color:#1a1a1a;">    x</span><span style="color:#aa22ff;font-weight:700;">=</span><span style="color:#ba2121;">&quot;Coke<span style="-webkit-text-stroke:0.7px currentColor;">_</span>Q<span style="-webkit-text-stroke:0.7px currentColor;">_</span>EX<span style="-webkit-text-stroke:0.7px currentColor;">_</span>R&quot;</span><span style="color:#1a1a1a;">,</span></span>
<span class="t" id="t46" style="left:637.6px;top:611.6px;height:25.5px;line-height:25.5px;font-size:17.8px;color:#1a1a1a;font-weight:400;font-family:'DejaVu Sans Mono', 'Liberation Mono', monospace;font-style:normal;letter-spacing:0.009px;"><span style="color:#1a1a1a;">    y</span><span style="color:#aa22ff;font-weight:700;">=</span><span style="color:#ba2121;">&quot;Dow<span style="-webkit-text-stroke:0.7px currentColor;">_</span>Q<span style="-webkit-text-stroke:0.7px currentColor;">_</span>EX<span style="-webkit-text-stroke:0.7px currentColor;">_</span>R&quot;</span><span style="color:#1a1a1a;">,</span></span>
<span class="t" id="t47" style="left:637.6px;top:637.1px;height:25.5px;line-height:25.5px;font-size:17.8px;color:#1a1a1a;font-weight:400;font-family:'DejaVu Sans Mono', 'Liberation Mono', monospace;font-style:normal;letter-spacing:0.014px;"><span style="color:#1a1a1a;">    title</span><span style="color:#aa22ff;font-weight:700;">=</span><span style="color:#ba2121;">&quot;Scatterplot Coke Stock Excess Return vs DOW 30 Index Excess Return&quot;</span><span style="color:#1a1a1a;">,</span></span>
<span class="t" id="t48" style="left:637.6px;top:662.6px;height:25.5px;line-height:25.5px;font-size:17.8px;color:#1a1a1a;font-weight:400;font-family:'DejaVu Sans Mono', 'Liberation Mono', monospace;font-style:normal;letter-spacing:0.001px;"><span style="color:#1a1a1a;">)</span></span>
<span class="t" id="t49" style="left:637.6px;top:688.1px;height:25.5px;line-height:25.5px;font-size:17.8px;color:#1a1a1a;font-weight:400;font-family:'DejaVu Sans Mono', 'Liberation Mono', monospace;font-style:normal;letter-spacing:0.014px;"><span style="color:#1a1a1a;">scatt.</span><span style="color:#0055aa;">set</span><span style="color:#1a1a1a;">(xlabel</span><span style="color:#aa22ff;font-weight:700;">=</span><span style="color:#ba2121;">&quot;KO Stock Excess Return&quot;</span><span style="color:#1a1a1a;">, ylabel</span><span style="color:#aa22ff;font-weight:700;">=</span><span style="color:#ba2121;">&quot;DOW 30 Index Excess Return&quot;</span><span style="color:#1a1a1a;">)</span></span>
<span class="t" id="t50" style="left:637.6px;top:713.6px;height:25.5px;line-height:25.5px;font-size:17.8px;color:#1a1a1a;font-weight:400;font-family:'DejaVu Sans Mono', 'Liberation Mono', monospace;font-style:normal;letter-spacing:0.012px;"><span style="color:#1a1a1a;">plt.</span><span style="color:#0055aa;">show</span><span style="color:#1a1a1a;">()</span></span>
<span class="t" id="t51" style="left:578.6px;top:451.5px;height:25.5px;line-height:25.5px;font-size:17.8px;color:#adadad;font-weight:400;font-family:'DejaVu Sans Mono', 'Liberation Mono', monospace;font-style:normal;letter-spacing:0.013px;">[2]:</span>
<span class="t" id="t52" style="left:578.6px;top:535.5px;height:25.5px;line-height:25.5px;font-size:17.8px;color:#307fc1;font-weight:400;font-family:'DejaVu Sans Mono', 'Liberation Mono', monospace;font-style:normal;letter-spacing:0.013px;">[3]:</span>
<span class="t" id="t53" style="left:920.5px;top:761.1px;height:30px;line-height:30px;font-size:20px;color:#111;font-weight:400;font-family:'DejaVu Sans', 'Liberation Sans', sans-serif;font-style:normal;letter-spacing:-0.587px;">Scatterplot Coke Stock Excess Return vs DOW 30 Index Excess Return</span>
<span class="t" style="left:564px;top:417.100px;height:124px;line-height:124px;font-size:124px;font-weight:700;font-family:'Liberation Sans',sans-serif;color:rgba(255,255,255,0.52);letter-spacing:0px;">Buildwithme</span>
</body></html>
